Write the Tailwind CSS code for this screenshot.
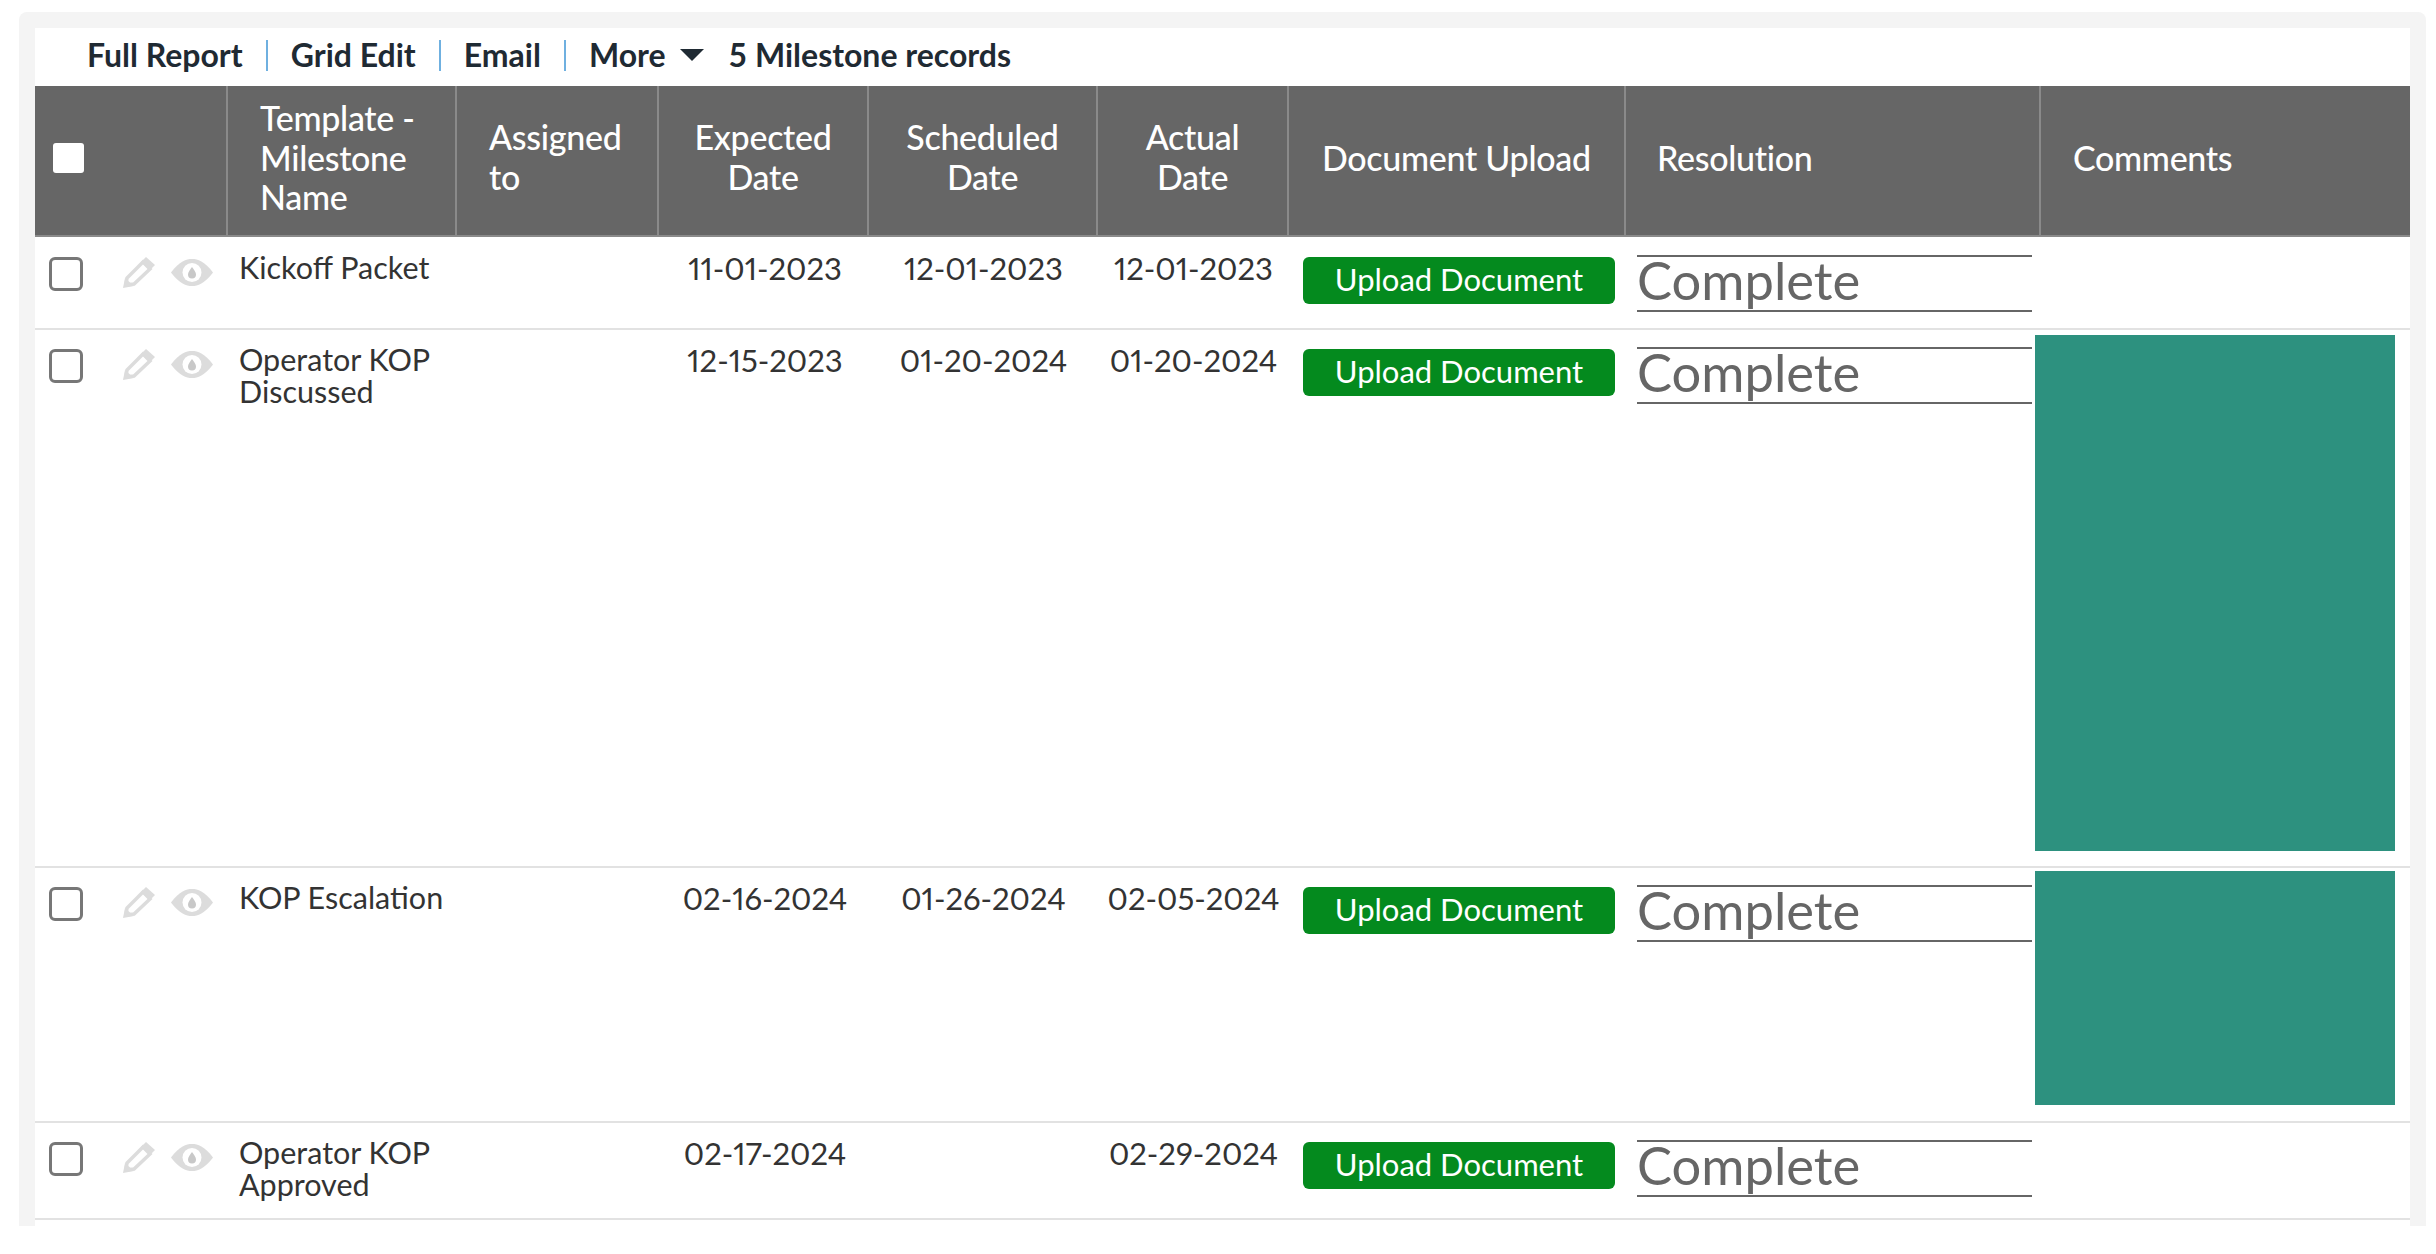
<!DOCTYPE html>
<html lang="en">
<head>
<meta charset="utf-8">
<title>Milestones</title>
<script src="https://cdn.jsdelivr.net/npm/@tailwindcss/browser@4"></script>
</head>
<body class="bg-white font-['Lato',sans-serif] text-[#333]">
  <!-- shared row icons -->
  <svg class="hidden">
    <symbol id="pencil" viewBox="0 0 32 31">
      <path d="M3 28 L4 21 L20 5 L27 12 L11 27 Z" fill="#fff" stroke="#dcdcdc" stroke-width="3.5"/>
      <path d="M18 5 L23 0 L32 8 L27 13 Z" fill="#dcdcdc"/>
      <path d="M0 31 L2 21 L11 29 Z" fill="#dcdcdc"/>
    </symbol>
    <symbol id="eye" viewBox="0 0 42 27">
      <path d="M0 13.5 C9 2 15 0 21 0 C27 0 33 2 42 13.5 C33 25 27 27 21 27 C15 27 9 25 0 13.5 Z" fill="#dcdcdc"/>
      <circle cx="21" cy="13.5" r="9.5" fill="#fff"/>
      <path d="M21 8 C23 11 25 13 25 15.5 A4 4 0 0 1 17 15.5 C17 13 19 11 21 8 Z" fill="#c8c8c8"/>
    </symbol>
  </svg>

  <div class="ml-[19px] mt-[12px] w-[2407px] h-[1214px] rounded-t-lg bg-[#f4f4f4] px-[16px] pt-[16px]">
    <div class="h-[1198px] bg-white">
      <div class="flex h-[58px] items-center gap-[23px] pl-[52px] pb-[4px] text-[32px] font-bold text-[#1f2a33]">
        <a href="#">Full Report</a>
        <span class="h-[31px] w-[2px] bg-[#6fb0e0]"></span>
        <a href="#">Grid Edit</a>
        <span class="h-[31px] w-[2px] bg-[#6fb0e0]"></span>
        <a href="#">Email</a>
        <span class="h-[31px] w-[2px] bg-[#6fb0e0]"></span>
        <a href="#" class="flex items-center gap-[14px]">More
          <svg class="h-[12px] w-[24px]" viewBox="0 0 24 12"><path d="M0 0 H24 L12 12 Z" fill="#1f2a33"/></svg>
        </a>
        <span class="ml-[2px]">5 Milestone records</span>
      </div>

      <table class="w-[2375px] table-fixed text-[30.5px] leading-[32px]">
        <colgroup>
          <col class="w-[192px]"><col class="w-[229px]"><col class="w-[202px]"><col class="w-[210px]"><col class="w-[229px]"><col class="w-[191px]"><col class="w-[337px]"><col class="w-[415px]"><col class="w-[370px]">
        </colgroup>
        <thead class="bg-[#666] text-[34px] leading-[39.5px] tracking-[-0.3px] text-white">
          <tr class="h-[150px] border-b-2 border-[#8a8a8a]">
            <th class="pl-[18px] pb-[6px] text-left align-middle"><input type="checkbox" class="block h-[30px] w-[31px] appearance-none rounded-[3px] bg-white"></th>
            <th class="border-l-2 border-[#8a8a8a] pl-[32px] pb-[6px] text-left font-medium">Template - Milestone Name</th>
            <th class="border-l-2 border-[#8a8a8a] pl-[32px] pb-[8px] text-left font-medium">Assigned to</th>
            <th class="border-l-2 border-[#8a8a8a] px-[20px] pb-[8px] text-center font-medium">Expected Date</th>
            <th class="border-l-2 border-[#8a8a8a] px-[20px] pb-[8px] text-center font-medium">Scheduled Date</th>
            <th class="border-l-2 border-[#8a8a8a] px-[20px] pb-[8px] text-center font-medium">Actual Date</th>
            <th class="border-l-2 border-[#8a8a8a] pl-[33px] pb-[6px] text-left font-medium">Document Upload</th>
            <th class="border-l-2 border-[#8a8a8a] pl-[31px] pb-[6px] text-left font-medium">Resolution</th>
            <th class="border-l-2 border-[#8a8a8a] pl-[32px] pb-[6px] text-left font-medium">Comments</th>
          </tr>
        </thead>
        <tbody>
          <tr class="h-[93px] border-b-2 border-[#e2e2e2] align-top">
            <td class="pt-[20px] pl-[14px]">
              <div class="flex items-start">
                <input type="checkbox" class="h-[34px] w-[34px] appearance-none rounded-[6px] border-[3px] border-[#777] bg-white">
                <svg class="ml-[40px] h-[31px] w-[32px]"><use href="#pencil"/></svg>
                <svg class="ml-[16px] mt-[2px] h-[27px] w-[42px]"><use href="#eye"/></svg>
              </div>
            </td>
            <td class="pt-[14px] pl-[12px]">Kickoff Packet</td>
            <td></td>
            <td class="pt-[15px] pl-[4px] text-center text-[31px] proportional-nums">11-01-2023</td>
            <td class="pt-[15px] pl-[2px] text-center text-[31px] proportional-nums">12-01-2023</td>
            <td class="pt-[15px] pl-[2px] text-center text-[31px] proportional-nums">12-01-2023</td>
            <td class="pt-[20px] pl-[15px]"><button class="block h-[47px] w-[312px] rounded-[6px] bg-[#048a1e] pb-[3px] text-[31px] text-white">Upload Document</button></td>
            <td class="pt-[18px] pl-[12px]"><div class="h-[57px] w-[395px] border-y-2 border-[#666] text-[52.5px] leading-[45px] text-[#666]">Complete</div></td>
            <td></td>
          </tr>
          <tr class="h-[538px] border-b-2 border-[#e2e2e2] align-top">
            <td class="pt-[19px] pl-[14px]">
              <div class="flex items-start">
                <input type="checkbox" class="h-[34px] w-[34px] appearance-none rounded-[6px] border-[3px] border-[#777] bg-white">
                <svg class="ml-[40px] h-[31px] w-[32px]"><use href="#pencil"/></svg>
                <svg class="ml-[16px] mt-[2px] h-[27px] w-[42px]"><use href="#eye"/></svg>
              </div>
            </td>
            <td class="pt-[13px] pl-[12px]">Operator KOP Discussed</td>
            <td></td>
            <td class="pt-[14px] pl-[4px] text-center text-[31px] proportional-nums">12-15-2023</td>
            <td class="pt-[14px] pl-[2px] text-center text-[31px] proportional-nums">01-20-2024</td>
            <td class="pt-[14px] pl-[2px] text-center text-[31px] proportional-nums">01-20-2024</td>
            <td class="pt-[19px] pl-[15px]"><button class="block h-[47px] w-[312px] rounded-[6px] bg-[#048a1e] pb-[3px] text-[31px] text-white">Upload Document</button></td>
            <td class="pt-[17px] pl-[12px]"><div class="h-[57px] w-[395px] border-y-2 border-[#666] text-[52.5px] leading-[45px] text-[#666]">Complete</div></td>
            <td class="pt-[5px]"><div class="-ml-[5px] h-[516px] w-[360px] bg-[#2d917f]"></div></td>
          </tr>
          <tr class="h-[255px] border-b-2 border-[#e2e2e2] align-top">
            <td class="pt-[19px] pl-[14px]">
              <div class="flex items-start">
                <input type="checkbox" class="h-[34px] w-[34px] appearance-none rounded-[6px] border-[3px] border-[#777] bg-white">
                <svg class="ml-[40px] h-[31px] w-[32px]"><use href="#pencil"/></svg>
                <svg class="ml-[16px] mt-[2px] h-[27px] w-[42px]"><use href="#eye"/></svg>
              </div>
            </td>
            <td class="pt-[13px] pl-[12px]">KOP Escalation</td>
            <td></td>
            <td class="pt-[14px] pl-[4px] text-center text-[31px] proportional-nums">02-16-2024</td>
            <td class="pt-[14px] pl-[2px] text-center text-[31px] proportional-nums">01-26-2024</td>
            <td class="pt-[14px] pl-[2px] text-center text-[31px] proportional-nums">02-05-2024</td>
            <td class="pt-[19px] pl-[15px]"><button class="block h-[47px] w-[312px] rounded-[6px] bg-[#048a1e] pb-[3px] text-[31px] text-white">Upload Document</button></td>
            <td class="pt-[17px] pl-[12px]"><div class="h-[57px] w-[395px] border-y-2 border-[#666] text-[52.5px] leading-[45px] text-[#666]">Complete</div></td>
            <td class="pt-[3px]"><div class="-ml-[5px] h-[234px] w-[360px] bg-[#2d917f]"></div></td>
          </tr>
          <tr class="h-[97px] border-b-2 border-[#e2e2e2] align-top">
            <td class="pt-[19px] pl-[14px]">
              <div class="flex items-start">
                <input type="checkbox" class="h-[34px] w-[34px] appearance-none rounded-[6px] border-[3px] border-[#777] bg-white">
                <svg class="ml-[40px] h-[31px] w-[32px]"><use href="#pencil"/></svg>
                <svg class="ml-[16px] mt-[2px] h-[27px] w-[42px]"><use href="#eye"/></svg>
              </div>
            </td>
            <td class="pt-[13px] pl-[12px]">Operator KOP Approved</td>
            <td></td>
            <td class="pt-[14px] pl-[4px] text-center text-[31px] proportional-nums">02-17-2024</td>
            <td></td>
            <td class="pt-[14px] pl-[2px] text-center text-[31px] proportional-nums">02-29-2024</td>
            <td class="pt-[19px] pl-[15px]"><button class="block h-[47px] w-[312px] rounded-[6px] bg-[#048a1e] pb-[3px] text-[31px] text-white">Upload Document</button></td>
            <td class="pt-[17px] pl-[12px]"><div class="h-[57px] w-[395px] border-y-2 border-[#666] text-[52.5px] leading-[45px] text-[#666]">Complete</div></td>
            <td></td>
          </tr>
        </tbody>
      </table>
    </div>
  </div>
</body>
</html>
